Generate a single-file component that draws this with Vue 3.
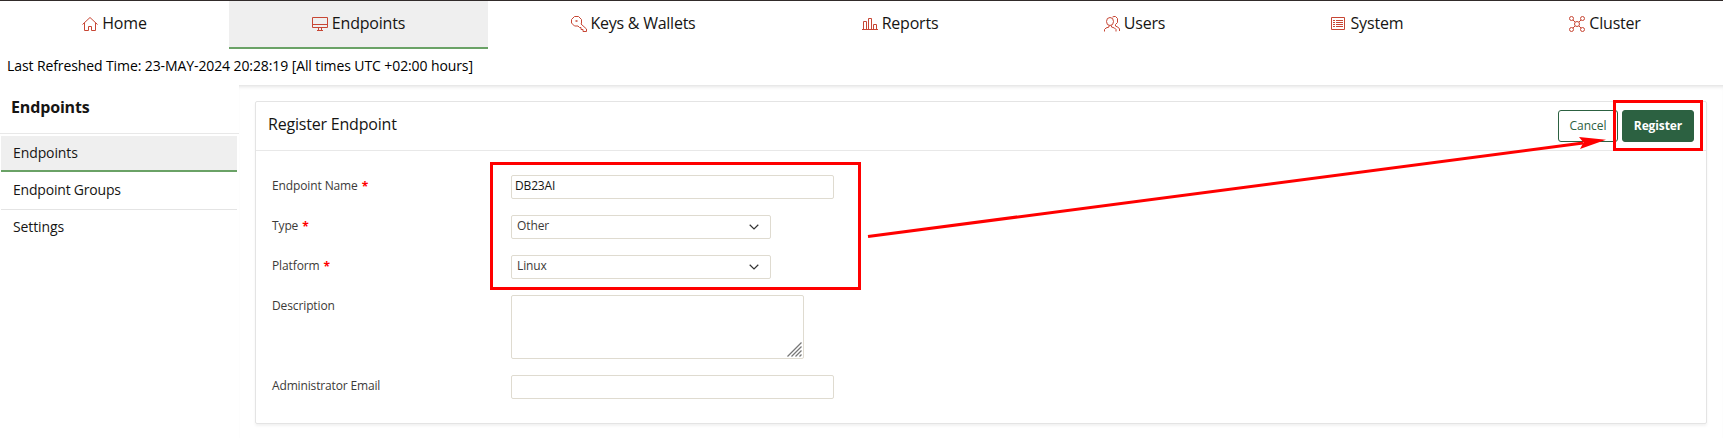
<script setup>
const tabs = [
  { label: 'Home', icon: 'home', cls: 't-home' },
  { label: 'Endpoints', icon: 'monitor', cls: 't-endpoints', active: true },
  { label: 'Keys & Wallets', icon: 'key', cls: 't-keys' },
  { label: 'Reports', icon: 'chart', cls: 't-reports' },
  { label: 'Users', icon: 'users', cls: 't-users' },
  { label: 'System', icon: 'list', cls: 't-system' },
  { label: 'Cluster', icon: 'cluster', cls: 't-cluster' }
]
const links = [
  { label: 'Endpoints', active: true },
  { label: 'Endpoint Groups', cls: 'tight' },
  { label: 'Settings' }
]
</script>

<template>
  <div class="page">
    <nav class="tabs">
      <a v-for="t in tabs" :key="t.label" class="tab" :class="[t.cls, { active: t.active }]">
        <svg class="icon" width="16" height="16" viewBox="0 0 16 16">
          <path v-if="t.icon === 'home'" d="M.5 8.500 8 1.500l7.500 7M2.500 7v7.500h4V10.500h3v4h4V7" />
          <g v-else-if="t.icon === 'monitor'">
            <path d="M.5 1.500h15v10H.5zM.5 8.500h15M6.500 11.500v2.500M9.500 11.500v2.500M5 14.500h6" />
          </g>
          <g v-else-if="t.icon === 'key'">
            <path d="M3.500.5h4l3 3v3.500l-.5 1 5.500 5v2.500h-3.500v-2h-2v-2h-1.500l-1.500-1.500h-3.500l-3-3V3.500z" />
            <path d="M4.500 5h2" class="dot" />
          </g>
          <path v-else-if="t.icon === 'chart'" d="M0 13.500h16M1.500 13.500v-8h3v8M6.500 13.500v-11h3v11M11.500 13.500v-5h3v5" />
          <g v-else-if="t.icon === 'users'">
            <ellipse cx="6" cy="5.500" rx="3.500" ry="4" />
            <path d="M.5 15.500v-2l1.500-1.500 3-1V9.500M7.500 9.500V11l3 1 1.500 1.500v2M8.500 1l1.500-.5h1.500l2 2v4l-2 2v1.500l3 1.500 1 1.500v2" />
          </g>
          <g v-else-if="t.icon === 'list'">
            <path d="M1.500 1.500h13v12h-13zM3 4.500h2M6 4.500h7M3 6.500h2M6 6.500h7M3 8.500h2M6 8.500h7M3 10.500h2M6 10.500h7" />
          </g>
          <g v-else>
            <circle cx="2.500" cy="2.500" r="2" /><circle cx="13.500" cy="2.500" r="2" />
            <circle cx="2.500" cy="13.500" r="2" /><circle cx="13.500" cy="13.500" r="2" />
            <circle cx="8" cy="8" r="2.500" />
            <path d="m4 4 2 2M12 4l-2 2M4 12l2-2M12 12l-2-2" />
          </g>
        </svg>
        <span>{{ t.label }}</span>
      </a>
    </nav>

    <div class="refreshed">Last Refreshed Time: 23-MAY-2024 20:28:19 [All times UTC +02:00 hours]</div>

    <div class="body">
      <aside class="side">
        <h2>Endpoints</h2>
        <a v-for="l in links" :key="l.label" class="link" :class="[l.cls, { current: l.active }]">{{ l.label }}</a>
      </aside>

      <main class="main">
        <section class="panel">
          <header class="head">
            <h1>Register Endpoint</h1>
            <button class="btn cancel">Cancel</button>
            <button class="btn register">Register</button>
          </header>
          <div class="form">
            <div class="row">
              <label>Endpoint Name <b>*</b></label>
              <div class="field wide">DB23AI</div>
            </div>
            <div class="row">
              <label>Type <b>*</b></label>
              <div class="field select">Other
                <svg width="10" height="6" viewBox="0 0 10 6"><path d="M.7.7 5 4.900 9.300.7" /></svg>
              </div>
            </div>
            <div class="row">
              <label>Platform <b>*</b></label>
              <div class="field select">Linux
                <svg width="10" height="6" viewBox="0 0 10 6"><path d="M.7.7 5 4.900 9.300.7" /></svg>
              </div>
            </div>
            <div class="row tall">
              <label>Description</label>
              <div class="field area">
                <svg width="15" height="15" viewBox="0 0 15 15"><path d="M.5 14.500l14-14M4.500 14.500l10-10M8.500 14.500l6-6M12.500 14.500l2-2" /></svg>
              </div>
            </div>
            <div class="row">
              <label class="long">Administrator Email</label>
              <div class="field wide"></div>
            </div>
          </div>
        </section>
      </main>
    </div>

    <svg class="marks" width="1723" height="438" viewBox="0 0 1723 438">
      <rect x="491.500" y="163.500" width="368" height="125" />
      <rect x="1614.500" y="101.500" width="87" height="48" />
      <path d="M868 236.500 1583 143" />
      <path class="tip" d="M1606 139.800 1579 137l4.500 5.500-3.500 6.500z" />
    </svg>
  </div>
</template>

<style>
body { margin: 0; background: #fff; }
</style>

<style scoped>
* { box-sizing: border-box; }
.page {
  position: relative;
  width: 1723px;
  height: 438px;
  overflow: hidden;
  border-top: 1px solid #312b2a;
  background: #fff;
  color: #161513;
  font-family: "Open Sans", "Noto Sans", sans-serif;
}
.tabs {
  display: grid;
  grid-template-columns: 229px 259px 290px 244px 225px 240px 236px;
  height: 48px;
}
.tab {
  display: flex;
  align-items: center;
  justify-content: center;
  gap: 4px;
  padding-bottom: 2px;
  border-bottom: 2px solid transparent;
  font-size: 16px;
  line-height: 22px;
  letter-spacing: -0.2px;
  white-space: nowrap;
}
.tab.active { background: #efefef; border-color: #6aa266; }
.t-keys { letter-spacing: -0.25px; }
.t-home, .t-system { letter-spacing: -0.15px; }
.icon { margin-top: 1px; fill: none; stroke: #c74634; stroke-width: 1; }
.dot { stroke-width: 1.500; }
.refreshed {
  height: 36px;
  padding-left: 7px;
  font-size: 14px;
  line-height: 33px;
  letter-spacing: -0.1px;
  color: #000;
  white-space: nowrap;
}
.body { display: flex; height: 353px; }
.side { width: 239px; }
h2 {
  margin: 0;
  height: 49px;
  padding-left: 11px;
  border-bottom: 1px solid #e8e8e8;
  font-size: 16px;
  line-height: 44px;
  letter-spacing: -0.15px;
}
.link {
  display: block;
  width: 236px;
  height: 38px;
  margin-left: 1px;
  padding-left: 12px;
  border-bottom: 1px solid #e4e4e4;
  font-size: 14px;
  line-height: 35px;
  letter-spacing: -0.1px;
}
.link.current {
  height: 36px;
  margin-top: 2px;
  border-bottom: 2px solid #6aa266;
  background: #efefef;
  line-height: 33px;
}
.link:last-child { border: 0; line-height: 33px; }
.link.tight { letter-spacing: -0.2px; }
.main {
  flex: 1;
  padding: 16px 16px 0;
  box-shadow: inset 0 4px 4px -3px #d8d8d8;
}
.panel {
  width: 1452px;
  height: 323px;
  border: 1px solid #e4e4e4;
  border-radius: 2px;
  box-shadow: 0 2px 3px #f2f2f2;
}
.head {
  display: flex;
  align-items: center;
  height: 49px;
  padding: 0 12px;
  border-bottom: 1px solid #e8e8e8;
}
h1 {
  flex: 1;
  margin: 0 0 4px;
  font-size: 16px;
  font-weight: 400;
  line-height: 22px;
  letter-spacing: -0.2px;
}
.btn {
  height: 32px;
  margin: 0 0 0 4px;
  padding: 0 0 2px;
  border: 1px solid #2c6141;
  border-radius: 3px;
  font: 12px "Open Sans", "Noto Sans", sans-serif;
}
.cancel { width: 60px; background: #fff; color: #2c6141; }
.register { width: 72px; background: #2c6141; color: #fff; font-weight: 700; letter-spacing: -0.1px; }
.form { padding: 24px 0 0 16px; }
.row {
  display: flex;
  align-items: flex-start;
  height: 40px;
  font-size: 12px;
}
.row.tall { height: 80px; }
label { width: 239px; color: #3c3a38; line-height: 22px; letter-spacing: -0.12px; }
.long { letter-spacing: -0.15px; }
label b { margin-left: 1px; color: #f00; font-size: 12px; line-height: 1; position: relative; top: 1px; }
.field {
  display: flex;
  height: 24px;
  border: 1px solid #dfdbd0;
  border-radius: 2px;
  line-height: 20px;
}
.wide { width: 323px; padding-left: 3px; letter-spacing: -0.15px; }
.select { width: 260px; justify-content: space-between; padding: 0 11px 0 5px; color: #3c3a38; letter-spacing: -0.1px; }
.select svg { margin-top: 8px; fill: none; stroke: #333; stroke-width: 1.200; }
.area { width: 293px; height: 64px; align-items: flex-end; justify-content: flex-end; padding: 1px; }
.area svg { fill: none; stroke: #777; stroke-width: 1.300; }
.marks { position: absolute; left: 0; top: -1px; fill: none; stroke: #f00; stroke-width: 3; pointer-events: none; }
.tip { fill: #f00; stroke: none; }
</style>
